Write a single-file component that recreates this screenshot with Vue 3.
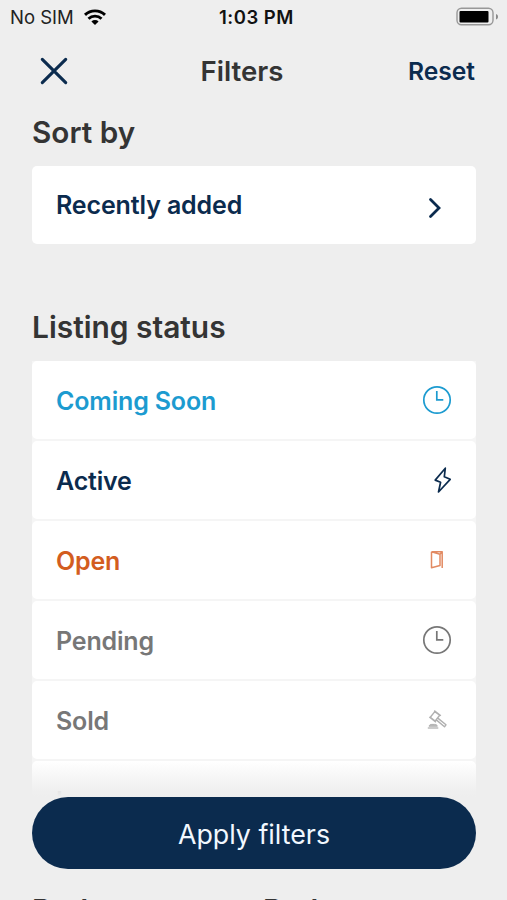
<script setup>
const statuses = [
  { label: 'Coming Soon', tone: 'sky', icon: 'clock' },
  { label: 'Active', tone: 'navy', icon: 'bolt' },
  { label: 'Open', tone: 'orange', icon: 'door' },
  { label: 'Pending', tone: 'gray', icon: 'clock' },
  { label: 'Sold', tone: 'gray', icon: 'gavel' },
  { label: 'Lease', tone: 'gray', icon: '' },
]
</script>

<template>
  <div class="screen">
    <div class="status-bar">
      <div class="carrier">
        <span>No SIM</span>
        <svg class="wifi" width="24" height="18" viewBox="0 0 24 18">
          <path d="M12 17 8.400 13.400a5.100 5.100 0 0 1 7.200 0Z" fill="#000" />
          <path d="M5.500 10.800a9.300 9.300 0 0 1 13 0M2 6.900a14.400 14.400 0 0 1 20 0" fill="none" stroke="#000" stroke-width="2.900" />
        </svg>
      </div>
      <span class="time">1:03 PM</span>
      <svg class="battery" width="43" height="20" viewBox="0 0 43 20">
        <rect x="1" y="1.200" width="36" height="16.600" rx="4.500" fill="none" stroke="#989898" stroke-width="1.400" />
        <rect x="3.500" y="4" width="29" height="11.500" rx="1" fill="#000" />
        <path d="M40 7v5.400c1.300-.4 2-1.400 2-2.700S41.300 7.400 40 7Z" fill="#8a8a8a" />
      </svg>
    </div>

    <header class="header">
      <svg class="close" width="28" height="28" viewBox="0 0 28 28">
        <path d="M2.300 2.300 25.700 25.700M25.700 2.300 2.300 25.700" fill="none" stroke="#0b2b4e" stroke-width="3.100" stroke-linecap="round" />
      </svg>
      <h1>Filters</h1>
      <span class="reset">Reset</span>
    </header>

    <section class="sort">
      <h2>Sort by</h2>
      <div class="card sort-card">
        <span class="label navy sort-label">Recently added</span>
        <svg class="chevron" width="16" height="24" viewBox="0 0 16 24">
          <path d="M3.500 3.500 12 12 3.500 20.500" fill="none" stroke="#0b2b4e" stroke-width="2.800" stroke-linecap="round" stroke-linejoin="miter" />
        </svg>
      </div>
    </section>

    <section class="listing">
      <h2 class="listing-title">Listing status</h2>
      <div class="rows">
        <div v-for="s in statuses" :key="s.label" class="card" :class="s.tone">
          <span class="label">{{ s.label }}</span>
          <svg v-if="s.icon === 'clock'" class="icon" width="30" height="30" viewBox="0 0 30 30">
            <circle cx="15" cy="15" r="13.200" stroke-width="1.700" />
            <path d="M14.800 6v8.800h6.500" stroke-width="1.700" />
          </svg>
          <svg v-else-if="s.icon === 'bolt'" class="icon" width="20" height="30" viewBox="0 0 20 30">
            <path d="M13.300 3.200 3.200 15.100l5.400 2.200-2.100 9.700L18.200 14.300l-5.900-2.500Z" stroke-width="1.700" stroke-linejoin="round" />
          </svg>
          <svg v-else-if="s.icon === 'door'" class="icon door" width="30" height="30" viewBox="0 0 30 30">
            <path d="M9.500 6.700h10.700v16.200M9.500 6.700v16.100l8.500-2.300V9.200L9.500 6.700M18 9.200l2.200-2.500" stroke-width="1.500" stroke-linejoin="round" />
          </svg>
          <svg v-else-if="s.icon === 'gavel'" class="icon gavel" width="30" height="30" viewBox="0 0 30 30">
            <path d="m12.800 6.600 4.900 3.700-4.500 5.700-4.900-3.700ZM12.200 5.600l6.700 5.100M7.300 12l6.700 5.100M15.800 13.100l8.200 6.700-1.500 2-8.200-6.900" stroke-width="1.400" stroke-linejoin="round" />
            <path d="M7 21.200c.6-1.500 1.400-1.800 2.900-1.800h2.600c1.500 0 2.300.4 2.900 1.800Z" stroke-width="1" fill="#bbb" />
            <path d="M5.800 23h10.500" stroke-width="1.300" />
          </svg>
        </div>
      </div>
    </section>

    <footer class="footer">
      <div class="fade"></div>
      <div class="action">
        <button type="button">Apply filters</button>
      </div>
    </footer>
    <section class="rooms">
      <h2>Beds</h2>
      <h2>Baths</h2>
    </section>
  </div>
</template>

<style>
body {
  background: #eee;
}
</style>

<style scoped>
.screen {
  width: 507px;
  height: 900px;
  overflow: hidden;
  background: #eee;
  font-family: Inter, "Liberation Sans", sans-serif;
  color: #343434;
}
.status-bar {
  display: grid;
  box-sizing: border-box;
  grid-template-columns: 209px auto 1fr;
  height: 34px;
  padding: 0 8px 0 10px;
  align-items: center;
  font-size: 18.500px;
  line-height: 24px;
  color: #222;
}
.carrier {
  display: flex;
  align-items: center;
  gap: 9px;
}
.wifi {
  margin-top: -1px;
}
.time {
  font-size: 18.500px;
  font-weight: 600;
  letter-spacing: 0.500px;
  color: #111;
}
.battery {
  justify-self: end;
}
.header {
  display: grid;
  grid-template-columns: 160.500px auto 1fr;
  align-items: center;
  height: 74px;
  padding: 0 32px 0 40px;
}
h1,
h2 {
  margin: 0;
  font-weight: 600;
}
h1 {
  font-size: 27.600px;
  line-height: 32px;
}
.reset {
  justify-self: end;
  font-size: 24.600px;
  font-weight: 600;
  color: #0b2b4e;
}
.sort,
.listing {
  padding: 0 31px 0 32px;
}
h2 {
  font-size: 29.900px;
  line-height: 48px;
}
.sort h2 {
  height: 58px;
  font-size: 29.700px;
}
.card {
  display: flex;
  box-sizing: border-box;
  align-items: center;
  justify-content: space-between;
  height: 78px;
  padding: 0 24px;
  border-radius: 5px;
  background: #fff;
}
.label {
  font-size: 25px;
  font-weight: 600;
  line-height: 30px;
  letter-spacing: -0.170px;
}
.rows .label {
  padding-top: 1px;
}
.sort-card {
  padding-right: 33px;
}
.sort-label {
  padding-bottom: 1px;
  letter-spacing: -0.130px;
}
.chevron {
  margin-top: 5px;
}
.listing {
  box-sizing: border-box;
  height: 553px;
  padding-top: 59px;
  overflow: hidden;
}
.listing-title {
  height: 58.400px;
}
.rows {
  display: flex;
  flex-direction: column;
  gap: 2px;
  background: #f5f5f5;
}
.rows .card {
  flex: none;
}
.icon {
  fill: none;
  stroke: currentColor;
}
.sky {
  color: #1c9bd0;
}
.navy {
  color: #0b2b4e;
}
.orange {
  color: #d35d1f;
}
.gray {
  color: #777;
}
.door {
  color: #e28a62;
}
.gavel {
  color: #b0b0b0;
}
.footer {
  position: relative;
  height: 72px;
}
.fade {
  position: absolute;
  right: 0;
  bottom: 100%;
  left: 0;
  height: 36px;
  background: linear-gradient(rgb(238 238 238 / 0), rgb(238 238 238 / 0.900) 80%, #eee);
}
.action {
  position: relative;
  padding: 0 31px 0 32px;
}
button {
  display: block;
  width: 100%;
  height: 72px;
  padding: 1px 0 0;
  border: 0;
  border-radius: 36px;
  background: #0b2b4e;
  color: #f2f8ff;
  font: 400 26.800px/32px Inter, "Liberation Sans", sans-serif;
}
.rooms {
  display: grid;
  grid-template-columns: 231px 1fr;
  padding: 17px 32px 0;
}
</style>
